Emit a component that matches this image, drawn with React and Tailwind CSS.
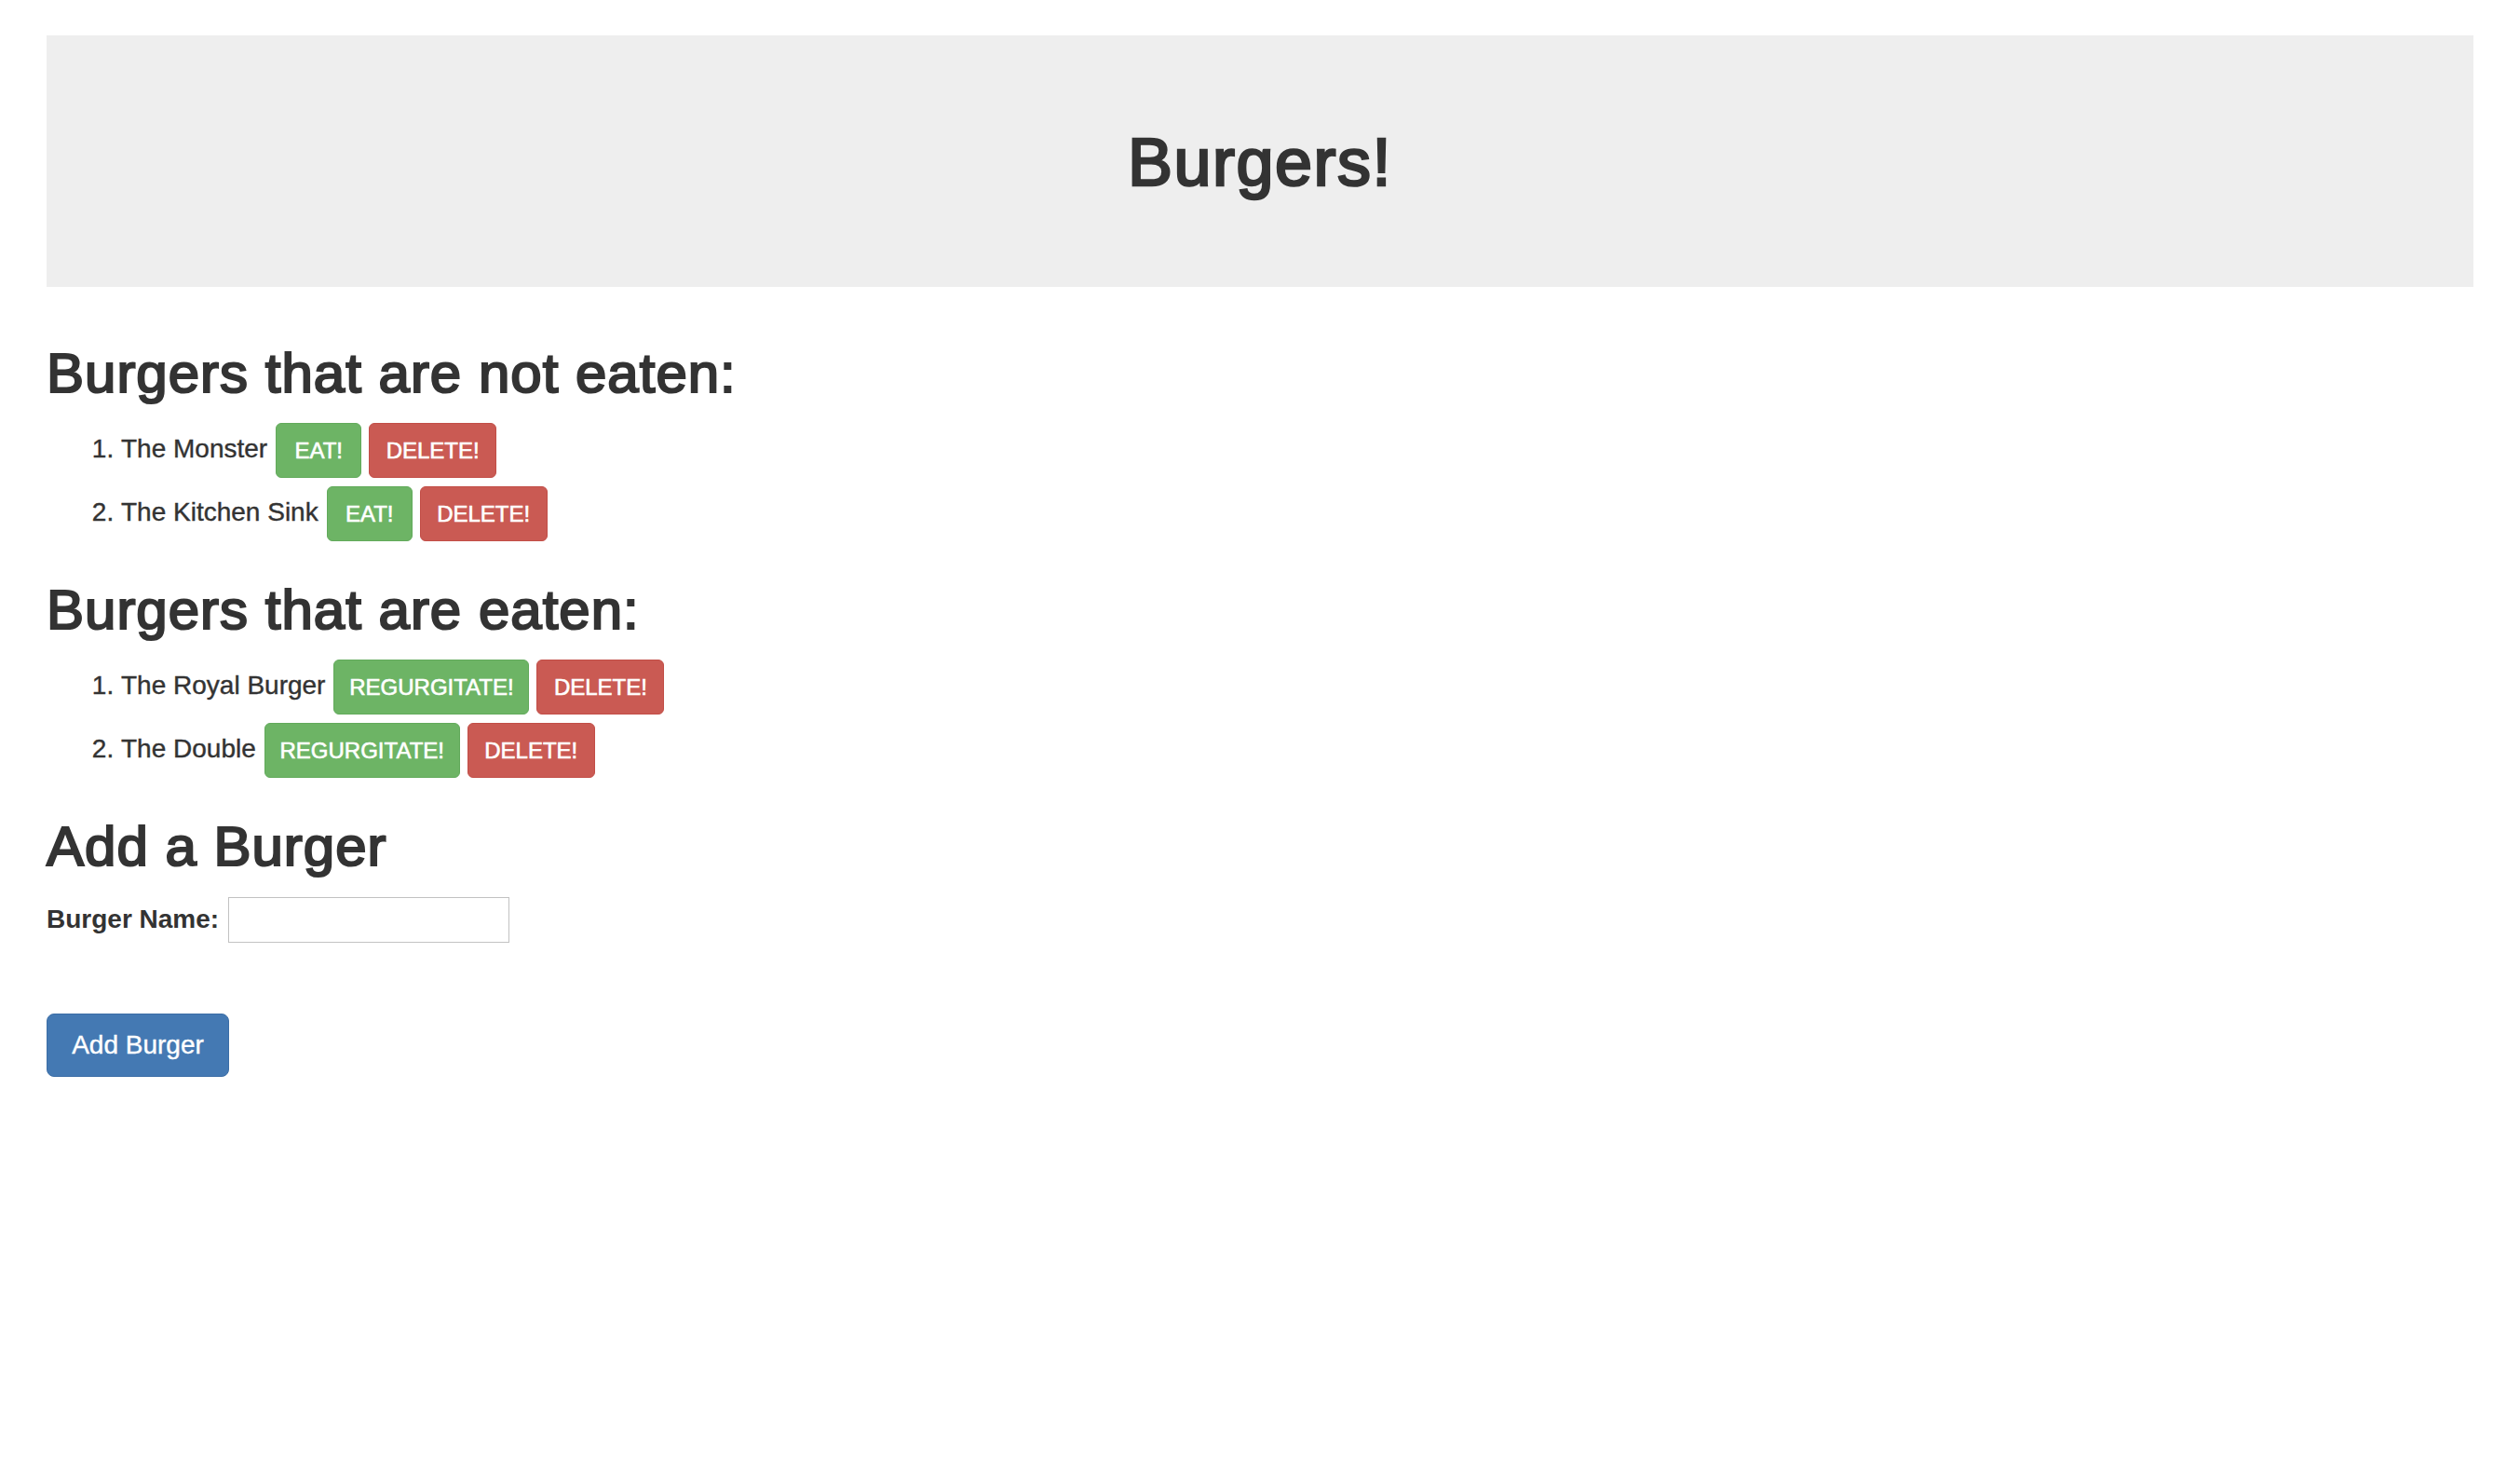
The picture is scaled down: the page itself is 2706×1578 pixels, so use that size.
export default function App() {
  const notEaten = ["The Monster", "The Kitchen Sink"];
  const eaten = ["The Royal Burger", "The Double"];

  const greenBtn =
    "inline-flex items-center justify-center h-[59px] rounded-[6px] border border-[#62aa5b] bg-[#6db465] text-white text-[24px] leading-[36px] whitespace-nowrap [-webkit-text-stroke:0.6px]";
  const redBtn =
    "inline-flex items-center justify-center h-[59px] w-[137px] rounded-[6px] border border-[#c24e47] bg-[#ca5a53] text-white text-[24px] leading-[36px] whitespace-nowrap [-webkit-text-stroke:0.6px]";

  return (
    <div className="min-h-screen bg-white font-['Liberation_Sans',Arial,sans-serif] text-[#333333] text-[28px] leading-[40px]">
      <div className="mx-[50px] mt-[38px] bg-[#eeeeee] pt-[97px] pb-[94px] text-center">
        <h1 className="text-[72px] leading-[79px] font-normal tracking-[1.5px] [-webkit-text-stroke:2.6px]">Burgers!</h1>
      </div>

      <div className="px-[50px]">
        <h2 className="mt-[60px] mb-[20px] text-[60px] leading-[66px] tracking-[1px] font-normal [-webkit-text-stroke:2.2px]">
          Burgers that are not eaten:
        </h2>
        <ol className="list-decimal pl-[80px] space-y-[9px] [-webkit-text-stroke:0.4px]">
          {notEaten.map((name) => (
            <li key={name}>
              <div className="inline-flex items-center gap-[8px] h-[59px]">
                <span className="pb-[4px] mr-[1px]">{name}</span>
                <button className={greenBtn + " w-[92px]"}>EAT!</button>
                <button className={redBtn}>DELETE!</button>
              </div>
            </li>
          ))}
        </ol>

        <h2 className="mt-[41px] mb-[20px] text-[60px] leading-[66px] tracking-[1px] font-normal [-webkit-text-stroke:2.2px]">
          Burgers that are eaten:
        </h2>
        <ol className="list-decimal pl-[80px] space-y-[9px] [-webkit-text-stroke:0.4px]">
          {eaten.map((name) => (
            <li key={name}>
              <div className="inline-flex items-center gap-[8px] h-[59px]">
                <span className="pb-[4px] mr-[1px]">{name}</span>
                <button className={greenBtn + " w-[210px]"}>REGURGITATE!</button>
                <button className={redBtn}>DELETE!</button>
              </div>
            </li>
          ))}
        </ol>

        <h2 className="mt-[41px] mb-[20px] text-[60px] leading-[66px] tracking-[1px] font-normal [-webkit-text-stroke:2.2px]">
          Add a Burger
        </h2>
        <form className="block" onSubmit={(e) => e.preventDefault()}>
          <div className="flex items-center gap-[10px] h-[50px]">
            <label htmlFor="burger" className="font-bold">
              Burger Name:
            </label>
            <input
              id="burger"
              type="text"
              className="w-[302px] h-[49px] border border-[#c2c2c2] bg-white px-[4px] text-[26px] outline-none"
            />
          </div>
          <button
            type="submit"
            className="mt-[76px] flex items-center justify-center h-[68px] w-[196px] rounded-[8px] border border-[#3c6ea6] bg-[#4479b3] text-white text-[28px] leading-[40px] [-webkit-text-stroke:0.4px]"
          >
            Add Burger
          </button>
        </form>
      </div>
    </div>
  );
}
